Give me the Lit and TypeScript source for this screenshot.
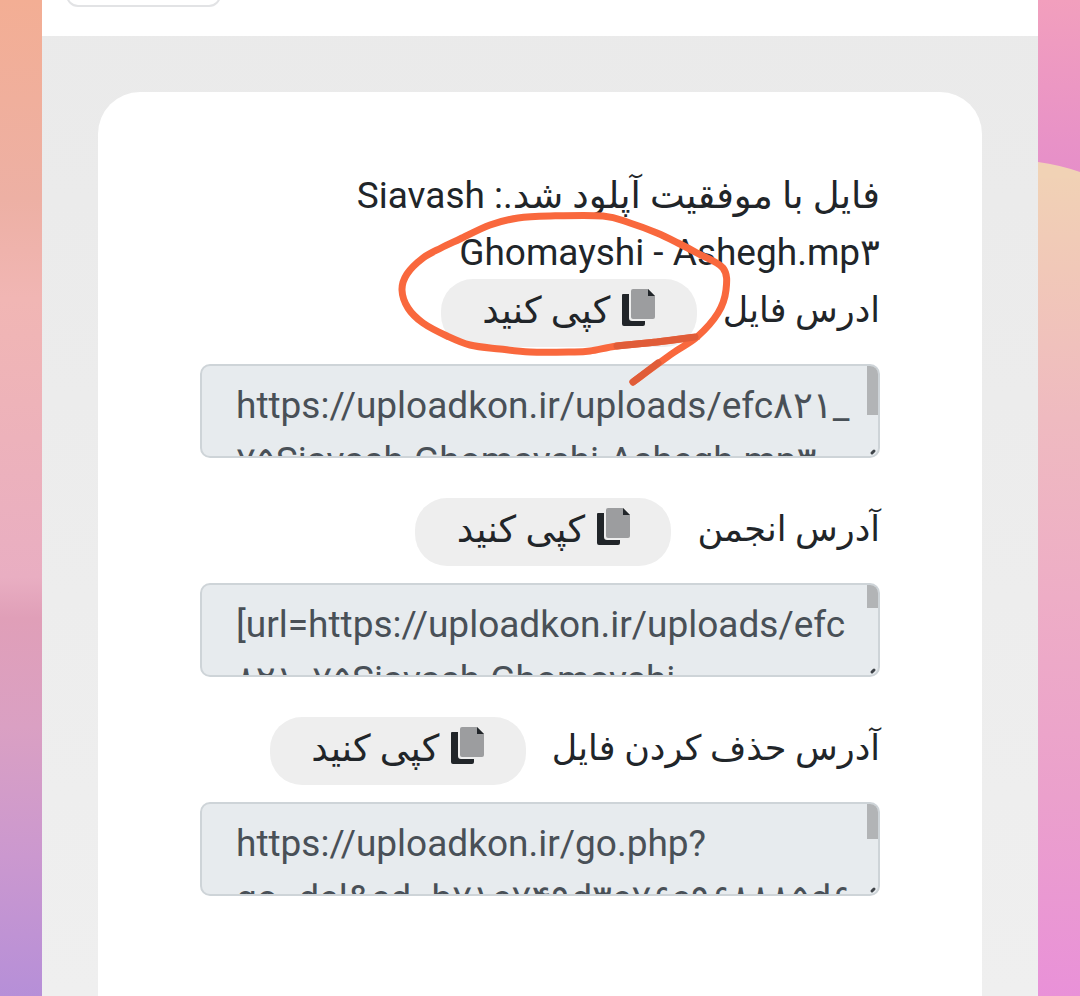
import { LitElement, html, css } from "lit";
import { customElement, property } from "lit/decorators.js";

type Point = [number, number];

/** Builds a smooth curve that passes through every given point. */
function smooth(points: Point[]): string {
  let d = `M${points[0][0]} ${points[0][1]}`;
  for (let i = 0; i < points.length - 1; i++) {
    const a = points[Math.max(i - 1, 0)];
    const b = points[i];
    const c = points[i + 1];
    const e = points[Math.min(i + 2, points.length - 1)];
    d += `C${b[0] + (c[0] - a[0]) / 6} ${b[1] + (c[1] - a[1]) / 6} ${c[0] - (e[0] - b[0]) / 6} ${c[1] - (e[1] - b[1]) / 6} ${c[0]} ${c[1]}`;
  }
  return d;
}

const LOOP: Point[] = [
  [697, 337], [657, 342], [617, 346], [590, 351], [570, 352], [530, 352], [500, 349], [470, 345],
  [447, 336], [423, 323], [408, 308], [402, 290], [407, 274], [423, 258], [441, 248], [460, 239],
  [490, 225], [518, 218], [550, 216], [603, 216], [630, 223], [657, 233], [678, 243], [697, 253],
  [723, 268], [726, 290], [718, 313], [697, 337], [673, 353], [633, 382],
];

@customElement("copy-field")
class CopyField extends LitElement {
  @property() label = "";
  @property() value = "";
  @property({ type: Number }) thumb = 30;

  static styles = css`
    :host { display: block; }
    .row { display: flex; align-items: center; gap: 26px; height: 68px; margin-bottom: 17px; }
    .label { padding-bottom: 4px; font-size: 35px; line-height: 56px; white-space: nowrap; }
    .copy {
      display: flex; align-items: center; justify-content: center; gap: 12px; box-sizing: border-box;
      width: 256px; height: 68px; padding: 0 0 5px; border: 0; border-radius: 32px;
      background: #eee; color: #212529; font-family: inherit; font-size: 37px; line-height: 56px;
      cursor: pointer;
    }
    .icon { width: 33px; height: 37px; flex: none; margin-bottom: 6px; }
    .box {
      position: relative; height: 94px; box-sizing: border-box; overflow: hidden;
      border: 2px solid #ced4d8; border-radius: 10px; background: #e7ebee;
    }
    .text {
      display: block; box-sizing: border-box; width: 100%; height: 90px; margin: 0;
      padding: 12px 14px 0 34px; border: 0; outline: 0; resize: none; background: none;
      color: #495057; font-family: inherit; font-size: 37px; line-height: 55px;
      white-space: pre; overflow: hidden; direction: ltr; text-align: left;
    }
    .thumb { position: absolute; top: 0; right: 0; width: 11px; background: #b2b4b6; }
    .grip { position: absolute; right: 1px; bottom: 0; width: 8px; height: 8px; }
  `;

  render() {
    return html`
      <div class="row">
        <label class="label" for="text">${this.label}</label>
        <button class="copy" type="button">
          <svg class="icon" viewBox="0 0 33 37" aria-hidden="true">
            <path fill="#212529" d="M1 5H7V29Q7 32 10 32H23V35Q23 37 21 37H2Q0 37 0 35V6Q0 5 1 5Z" />
            <path fill="#9c9d9f" d="M11 0H26L33 7V28Q33 30 31 30H11Q9 30 9 28V2Q9 0 11 0Z" />
            <path fill="#212529" d="M26 0L33 7H26Z" />
          </svg>
          <span>کپی کنید</span>
        </button>
      </div>
      <div class="box" dir="ltr">
        <textarea class="text" id="text" readonly .value=${this.value}></textarea>
        <div class="thumb" style="height:${this.thumb}px"></div>
        <svg class="grip" viewBox="0 0 8 8" aria-hidden="true">
          <path d="M3 5L5 3" stroke="#40454a" stroke-width="3" stroke-linecap="round" />
        </svg>
      </div>
    `;
  }
}

@customElement("app-root")
class AppRoot extends LitElement {
  static styles = css`
    :host {
      display: flex; min-height: 100vh; color: #212529;
      font-family: Roboto, "DejaVu Sans", sans-serif;
    }
    .side { position: relative; flex: none; width: 42px; overflow: hidden; }
    .left {
      background: linear-gradient(#f3ae94, #edb0a4 20%, #f1b6b4 30%, #e9aec2 58%, #e09fb8 62%, #daa0c3 73%, #cb98cf 86%, #b68fd8);
    }
    .right {
      background: linear-gradient(#f29fbd, #e98fc9 16%, #f1d2b5 17%, #f1c8b8 27%, #efbac0 42%, #eeadc6 60%, #eba0cc 80%, #e991d8);
    }
    .wash { position: absolute; top: 0; left: 0; width: 42px; height: 178px; }
    .page { display: flex; flex-direction: column; flex: 1; min-width: 0; background: linear-gradient(#eaeaea, #efefef); }
    .header {
      display: flex; align-items: flex-end; justify-content: flex-end; box-sizing: border-box;
      height: 36px; padding: 0 24px 29px; background: #fff; overflow: hidden;
    }
    .menu {
      flex: none; width: 155px; height: 56px; border: 2px solid #e2e3e5; border-radius: 12px; background: #fff;
    }
    .card {
      flex: 1; margin: 56px 56px 0; padding: 75px 102px 100px; background: #fff;
      border-radius: 42px 42px 0 0;
    }
    .content { position: relative; display: flex; flex-direction: column; gap: 40px; }
    .message { margin: 0 0 -42px; font-size: 37px; line-height: 57px; }
    .mark { position: absolute; top: 41px; right: 144px; width: 340px; height: 180px; pointer-events: none; }
  `;

  render() {
    return html`
      <div class="side left"></div>
      <main class="page" dir="rtl" lang="fa">
        <header class="header"><button class="menu" type="button" aria-label="منو"></button></header>
        <section class="card">
          <div class="content">
            <p class="message">فایل با موفقیت آپلود شد.: Siavash Ghomayshi - Ashegh.mp۳</p>
            <copy-field label="ادرس فایل" .thumb=${49}
              .value=${"https://uploadkon.ir/uploads/efc۸۲۱_\n۷۵Siavash-Ghomayshi-Ashegh.mp۳"}></copy-field>
            <copy-field label="آدرس انجمن" .thumb=${23}
              .value=${"[url=https://uploadkon.ir/uploads/efc\n۸۲۱_۷۵Siavash-Ghomayshi-"}></copy-field>
            <copy-field label="آدرس حذف کردن فایل" .thumb=${35}
              .value=${"https://uploadkon.ir/go.php?\ngo=del&ed=b۷۱e۷۴۹d۳e۷۶e۹۶۸۸۸۵d۶"}></copy-field>
            <svg class="mark" viewBox="396 208 340 180" aria-hidden="true" fill="none" stroke="#f9683d"
              stroke-width="7" stroke-linecap="round" stroke-linejoin="round">
              <path d=${smooth(LOOP)} />
              <path stroke="#e05c38" d="M617 346L657 342L695 337M658 363L633 382" />
            </svg>
          </div>
        </section>
      </main>
      <div class="side right">
        <svg class="wash" viewBox="0 0 42 178" preserveAspectRatio="none" aria-hidden="true">
          <defs>
            <linearGradient id="pink" x2="0" y2="1"><stop stop-color="#f29fbd" /><stop offset="1" stop-color="#e68fc9" /></linearGradient>
          </defs>
          <path fill="#f1d2b5" d="M0 150H42V178H0Z" />
          <path fill="url(#pink)" d="M0 0H42V172Q22 165 0 162Z" />
        </svg>
      </div>
    `;
  }
}
